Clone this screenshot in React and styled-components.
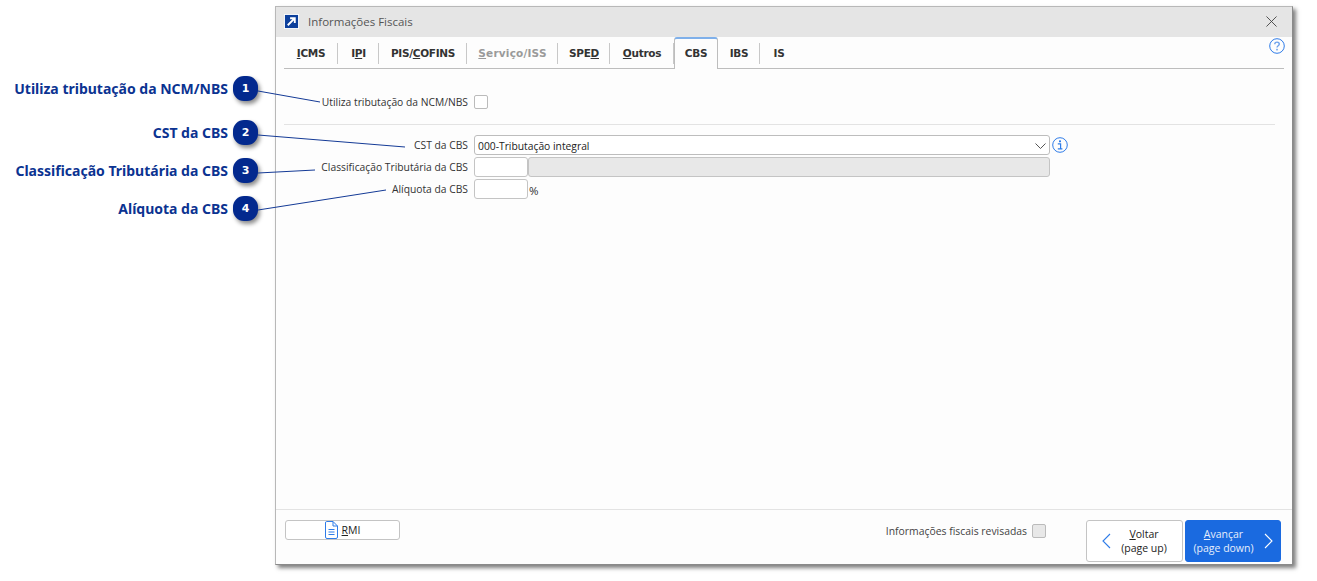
import styled, { createGlobalStyle } from 'styled-components'

const GlobalStyle = createGlobalStyle`
  *, *::before, *::after {
    box-sizing: border-box;
  }
  html, body {
    margin: 0;
    padding: 0;
    background: #fff;
  }
  #root {
    width: 1317px;
    height: 581px;
    overflow: hidden;
  }
`

const tabs = [
  { key: 'I', rest: 'CMS', width: 54 },
  { pre: 'I', key: 'P', rest: 'I', width: 41 },
  { pre: 'PIS/', key: 'C', rest: 'OFINS', width: 88 },
  { key: 'S', rest: 'erviço/ISS', disabled: true, width: 91 },
  { pre: 'SPE', key: 'D', width: 52 },
  { key: 'O', rest: 'utros', width: 64 },
  { pre: 'CBS', active: true, width: 44 },
  { pre: 'IBS', width: 42 },
  { pre: 'IS', last: true, width: 38 },
]

const callouts = [
  { n: 1, label: 'Utiliza tributação da NCM/NBS', gap: 0 },
  { n: 2, label: 'CST da CBS', gap: 18 },
  { n: 3, label: 'Classificação Tributária da CBS', gap: 12 },
  { n: 4, label: 'Alíquota da CBS', gap: 12 },
]

const App = () => {
  return (
    <Page>
      <GlobalStyle />
      <Callouts>
        {callouts.map(c => (
          <Callout key={c.n} $gap={c.gap}>
            <CalloutLabel>{c.label}</CalloutLabel>
            <Badge>{c.n}</Badge>
          </Callout>
        ))}
      </Callouts>

      <Window>
        <TitleBar>
          <AppIcon viewBox="0 0 16 16">
            <rect width="16" height="16" fill="#fff" />
            <rect x="1" y="1" width="14" height="14" fill="#0c3f9c" />
            <path d="M4 12 L11 5 M6.5 4.5 H11.5 V9.5" stroke="#fff" strokeWidth="2" fill="none" />
          </AppIcon>
          <WindowTitle>Informações Fiscais</WindowTitle>
          <CloseIcon viewBox="0 0 12 12">
            <path d="M0.5 0.5 L11.5 11.5 M11.5 0.5 L0.5 11.5" stroke="#444" strokeWidth="1" fill="none" />
          </CloseIcon>
        </TitleBar>

        <TabBar>
          {tabs.map((t, i) => (
            <Tab key={i} $width={t.width} $active={t.active} $disabled={t.disabled} $last={t.last}>
              {t.pre}{t.key && <u>{t.key}</u>}{t.rest}
            </Tab>
          ))}
          <HelpIcon viewBox="0 0 16 16">
            <circle cx="8" cy="8" r="7.3" stroke="#2f7ce8" strokeWidth="1" fill="none" />
            <path d="M5.8 6.2 C5.8 3.4 10.3 3.4 10.3 6.1 C10.3 7.8 8 7.8 8 9.6" stroke="#6ea2ec" strokeWidth="1.4" fill="none" />
            <rect x="7.2" y="10.8" width="1.6" height="1.6" fill="#6ea2ec" />
          </HelpIcon>
        </TabBar>

        <Body>
          <CheckRow>
            <FieldLabel>Utiliza tributação da NCM/NBS</FieldLabel>
            <CheckBox />
          </CheckRow>
          <Divider />
          <FieldRow>
            <FieldLabel>CST da CBS</FieldLabel>
            <SelectBox>
              <span>000-Tributação integral</span>
              <svg width="11" height="6" viewBox="0 0 11 6">
                <path d="M0.5 0.5 L5.5 5.5 L10.5 0.5" stroke="#555" fill="none" />
              </svg>
            </SelectBox>
            <InfoIcon viewBox="0 0 16 16">
              <circle cx="8" cy="8" r="7.3" stroke="#2f7ce8" strokeWidth="1" fill="none" />
              <rect x="7" y="3.4" width="2" height="1.8" fill="#2f7ce8" />
              <path d="M5.8 6.9 H8.6 V11.6 M5.8 11.9 H10.4" stroke="#2f7ce8" strokeWidth="1.2" fill="none" />
            </InfoIcon>
          </FieldRow>
          <FieldRow>
            <FieldLabel>Classificação Tributária da CBS</FieldLabel>
            <ShortInput />
            <ReadonlyInput />
          </FieldRow>
          <FieldRow>
            <FieldLabel>Alíquota da CBS</FieldLabel>
            <ShortInput />
            <Percent>%</Percent>
          </FieldRow>
        </Body>

        <Footer>
          <RmiButton>
            <svg width="13" height="18" viewBox="0 0 13 18">
              <path d="M1.5 0.5 H8 L12.5 5 V16 Q12.5 17.5 11 17.5 H2 Q0.5 17.5 0.5 16 V2 Q0.5 0.5 1.5 0.5 Z M8 0.5 V5 H12.5" stroke="#2f7ce8" fill="none" />
              <path d="M3.5 8.5 H9.5 M3.5 11 H9.5 M3.5 13.5 H9.5" stroke="#2f7ce8" strokeWidth="1.2" fill="none" />
            </svg>
            <span><u>R</u>MI</span>
          </RmiButton>
          <Reviewed>
            Informações fiscais revisadas
            <DisabledCheck />
          </Reviewed>
          <NavButton>
            <svg width="9" height="16" viewBox="0 0 9 16">
              <path d="M8 1 L1 8 L8 15" stroke="#2f7ce8" strokeWidth="1.1" fill="none" />
            </svg>
            <NavText><span><u>V</u>oltar</span><span>(page up)</span></NavText>
          </NavButton>
          <NavButton $primary>
            <NavText><span><u>A</u>vançar</span><span>(page down)</span></NavText>
            <svg width="9" height="16" viewBox="0 0 9 16">
              <path d="M1 1 L8 8 L1 15" stroke="#fff" strokeWidth="1.1" fill="none" />
            </svg>
          </NavButton>
        </Footer>
      </Window>

      <Leaders viewBox="0 0 1317 581">
        <path d="M258 91 L320 102" />
        <path d="M258 135 L405 147" />
        <path d="M258 173 L315 170" />
        <path d="M258 210 L386 190" />
      </Leaders>
    </Page>
  )
}

export default App

const Page = styled.div`
  position: relative;
  width: 1317px;
  height: 581px;
  display: flex;
  align-items: flex-start;
  background: #fff;
  font-family: "Open Sans", "Noto Sans", sans-serif;
`
const Callouts = styled.div`
  width: 258px;
  margin-right: 17px;
  padding-top: 75px;
  display: flex;
  flex-direction: column;
  flex-shrink: 0;
`
const Callout = styled.div`
  height: 26px;
  margin-top: ${p => p.$gap}px;
  display: flex;
  align-items: center;
  justify-content: flex-end;
  gap: 5px;
`
const CalloutLabel = styled.span`
  font-family: "Noto Sans", sans-serif;
  font-size: 14px;
  font-weight: 700;
  color: #0b3391;
  white-space: nowrap;
`
const Badge = styled.span`
  width: 25px;
  height: 25px;
  border-radius: 11px;
  background: #03298e;
  color: #fff;
  font-family: "DejaVu Sans", sans-serif;
  font-size: 11px;
  font-weight: 700;
  display: flex;
  align-items: center;
  justify-content: center;
  box-shadow: 2px 3px 4px rgba(0, 0, 0, 0.45);
  flex-shrink: 0;
`
const Window = styled.div`
  width: 1018px;
  height: 559px;
  margin-top: 6px;
  display: flex;
  flex-direction: column;
  background: #fdfdfd;
  border: 1px solid #b8b8b8;
  border-right: 1px solid #8a8a8a;
  border-bottom: 1px solid #8a8a8a;
  box-shadow: 3px 3px 4px rgba(0, 0, 0, 0.5);
  flex-shrink: 0;
`
const TitleBar = styled.div`
  height: 30px;
  flex-shrink: 0;
  background: #e5e5e5;
  display: flex;
  align-items: center;
  padding: 0 15px 2px 8px;
`
const AppIcon = styled.svg`
  width: 15px;
  height: 15px;
  margin-right: 9px;
`
const WindowTitle = styled.span`
  flex: 1;
  font-size: 11.5px;
  color: #555;
`
const CloseIcon = styled.svg`
  width: 11px;
  height: 11px;
`
const TabBar = styled.div`
  position: relative;
  height: 32px;
  margin: 0 8px 0 8px;
  flex-shrink: 0;
  display: flex;
  align-items: stretch;
  border-bottom: 1px solid #bdbdbd;
`
const Tab = styled.div`
  position: relative;
  width: ${p => p.$width}px;
  display: flex;
  align-items: center;
  justify-content: center;
  padding-top: 1px;
  font-family: "DejaVu Sans", sans-serif;
  font-size: 10.5px;
  font-weight: 700;
  letter-spacing: ${p => (p.$disabled ? '0.2px' : '-0.3px')};
  white-space: nowrap;
  color: ${p => (p.$disabled ? '#9a9a9a' : '#333')};
  ${p => p.$active
    ? `
    background: #fdfdfd;
    margin-bottom: -1px;
    padding: 0 0 2px;
    border: 1px solid #bdbdbd;
    border-top: 2px solid #7fb0ea;
    border-bottom: none;
    border-radius: 3px 3px 0 0;
  `
    : p.$last
      ? ''
      : `
    &::after {
      content: "";
      position: absolute;
      right: 0;
      top: 6px;
      bottom: 4px;
      width: 1px;
      background: #c8c8c8;
    }
  `}
`
const HelpIcon = styled.svg`
  position: absolute;
  right: -1px;
  top: 1px;
  width: 16px;
  height: 16px;
`
const Body = styled.div`
  flex: 1;
  padding: 24px 17px 0 8px;
  display: flex;
  flex-direction: column;
`
const CheckRow = styled.div`
  display: flex;
  align-items: center;
  height: 18px;
  margin-bottom: 13px;
`
const FieldRow = styled.div`
  display: flex;
  align-items: center;
  height: 20px;
  margin-bottom: 2px;
`
const FieldLabel = styled.label`
  width: 184px;
  margin-right: 6px;
  text-align: right;
  font-size: 10.3px;
  color: #333;
  white-space: nowrap;
  flex-shrink: 0;
`
const CheckBox = styled.span`
  width: 14px;
  height: 14px;
  border: 1px solid #bbb;
  border-radius: 2px;
  background: #fff;
`
const Divider = styled.div`
  height: 1px;
  background: #e3e3e3;
  margin-bottom: 10px;
`
const SelectBox = styled.div`
  width: 576px;
  height: 20px;
  border: 1px solid #bdbdbd;
  border-radius: 3px;
  background: #fff;
  padding: 1px 3px 0 3px;
  display: flex;
  align-items: center;
  justify-content: space-between;
  font-size: 10.3px;
  color: #222;
`
const InfoIcon = styled.svg`
  width: 16px;
  height: 16px;
  margin-left: 2px;
`
const ShortInput = styled.div`
  width: 54px;
  height: 20px;
  border: 1px solid #c4c4c4;
  border-radius: 3px;
  background: #fff;
  flex-shrink: 0;
`
const ReadonlyInput = styled.div`
  width: 522px;
  height: 20px;
  border: 1px solid #c4c4c4;
  border-radius: 3px;
  background: #e8e8e8;
`
const Percent = styled.span`
  margin: 2px 0 0 1px;
  font-size: 11.5px;
  color: #333;
`
const Footer = styled.div`
  height: 55px;
  flex-shrink: 0;
  border-top: 1px solid #e3e3e3;
  padding: 10px 11px 0 9px;
  display: flex;
  align-items: flex-start;
`
const RmiButton = styled.div`
  width: 115px;
  height: 20px;
  border: 1px solid #c4c4c4;
  border-radius: 3px;
  background: #fff;
  display: flex;
  align-items: center;
  justify-content: center;
  gap: 4px;
  font-size: 10.5px;
  color: #222;
`
const Reviewed = styled.div`
  margin: 4px 40px 0 auto;
  display: flex;
  align-items: center;
  gap: 5px;
  font-size: 10.4px;
  color: #444;
`
const DisabledCheck = styled.span`
  width: 14px;
  height: 14px;
  border: 1px solid #bbb;
  border-radius: 2px;
  background: #e8e8e8;
`
const NavButton = styled.div`
  width: ${p => (p.$primary ? '96px' : '97px')};
  height: 42px;
  margin-left: ${p => (p.$primary ? '2px' : '0')};
  border: 1px solid ${p => (p.$primary ? '#1a6ae0' : '#c4c4c4')};
  border-radius: 3px;
  background: ${p => (p.$primary ? '#1a6ae0' : '#fff')};
  color: ${p => (p.$primary ? '#e6eefb' : '#222')};
  display: flex;
  align-items: center;
  justify-content: center;
  gap: 10px;
`
const NavText = styled.div`
  display: flex;
  flex-direction: column;
  align-items: center;
  font-size: 10.5px;
  line-height: 14px;
`
const Leaders = styled.svg`
  position: absolute;
  left: 0;
  top: 0;
  width: 1317px;
  height: 581px;
  pointer-events: none;
  & path {
    stroke: #143a96;
    stroke-width: 1;
    fill: none;
  }
`
